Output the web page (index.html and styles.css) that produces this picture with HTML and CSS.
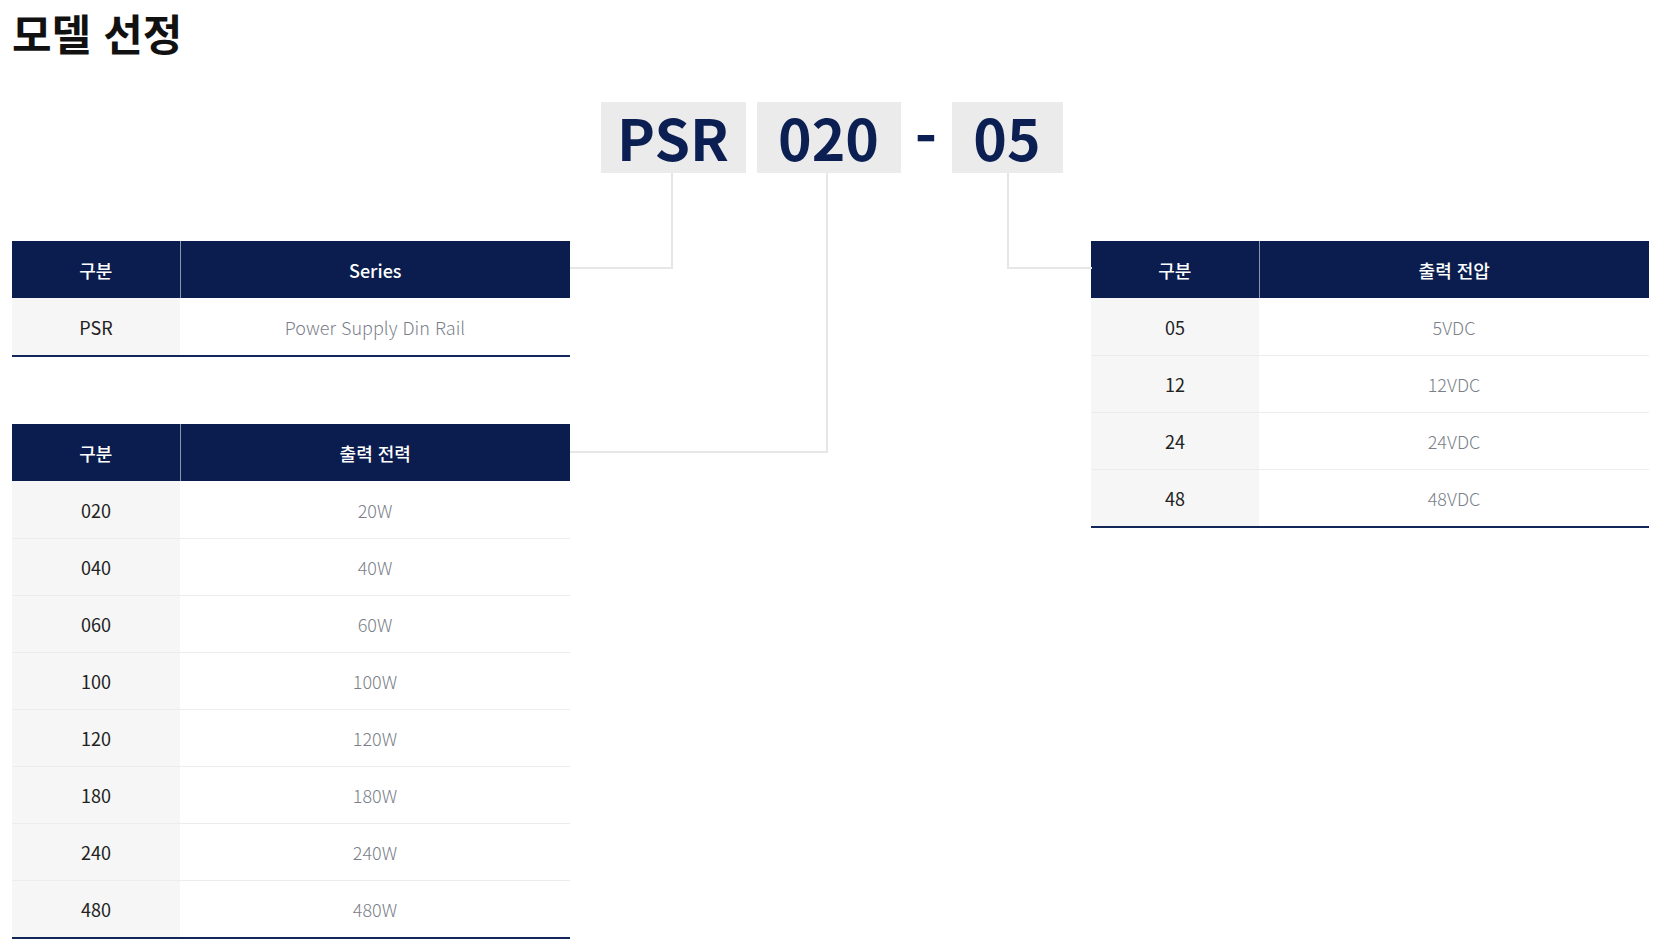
FILE: index.html
```html
<!DOCTYPE html>
<html lang="ko">
<head>
<meta charset="utf-8">
<title>모델 선정</title>
<link rel="stylesheet" href="styles.css">
</head>
<body>
<div class="page">
  <h1 class="title">모델 선정</h1>
  <div class="diagram">
    <div class="code-row">
      <span class="code code-wide">PSR</span>
      <span class="code code-wide">020</span>
      <span class="dash">-</span>
      <span class="code code-short">05</span>
    </div>
    <div class="tables">
      <div class="col">
        <table class="spec">
          <colgroup><col class="c1"><col></colgroup>
          <thead><tr><th>구분</th><th>Series</th></tr></thead>
          <tbody>
            <tr><td>PSR</td><td>Power Supply Din Rail</td></tr>
          </tbody>
        </table>
        <table class="spec spec-gap">
          <colgroup><col class="c1"><col></colgroup>
          <thead><tr><th>구분</th><th>출력 전력</th></tr></thead>
          <tbody>
            <tr><td>020</td><td>20W</td></tr>
            <tr><td>040</td><td>40W</td></tr>
            <tr><td>060</td><td>60W</td></tr>
            <tr><td>100</td><td>100W</td></tr>
            <tr><td>120</td><td>120W</td></tr>
            <tr><td>180</td><td>180W</td></tr>
            <tr><td>240</td><td>240W</td></tr>
            <tr><td>480</td><td>480W</td></tr>
          </tbody>
        </table>
      </div>
      <div class="col">
        <table class="spec">
          <colgroup><col class="c1"><col></colgroup>
          <thead><tr><th>구분</th><th>출력 전압</th></tr></thead>
          <tbody>
            <tr><td>05</td><td>5VDC</td></tr>
            <tr><td>12</td><td>12VDC</td></tr>
            <tr><td>24</td><td>24VDC</td></tr>
            <tr><td>48</td><td>48VDC</td></tr>
          </tbody>
        </table>
      </div>
    </div>
    <div class="conn conn-psr"></div>
    <div class="conn conn-power"></div>
    <div class="conn conn-volt"></div>
  </div>
</div>
</body>
</html>
```

FILE: styles.css
```css
html, body {
  margin: 0;
  padding: 0;
  background: #ffffff;
}

body {
  font-family: "Noto Sans CJK KR", "Noto Sans", sans-serif;
  color: #222222;
}

.page {
  width: 1663px;
  padding: 6px 0 0 0;
}

.title {
  margin: 0 0 0 12px;
  font-size: 43px;
  line-height: 52px;
  font-weight: 700;
  color: #111111;
  letter-spacing: 0;
}

.diagram {
  position: relative;
  margin-top: 44px;
}

.code-row {
  display: flex;
  justify-content: center;
  align-items: stretch;
  height: 71px;
}

.code {
  display: flex;
  align-items: center;
  justify-content: center;
  background: #ebebeb;
  color: #0c1f52;
  font-size: 57px;
  font-weight: 700;
  line-height: 1;
  padding-bottom: 3px;
  box-sizing: border-box;
}

.code-wide {
  width: 145px;
}

.code-wide + .code-wide {
  margin-left: 11px;
  width: 144px;
}

.code-short {
  width: 111px;
}

.dash {
  width: 51px;
  display: flex;
  align-items: center;
  justify-content: center;
  color: #0c1f52;
  font-size: 60px;
  font-weight: 700;
  line-height: 1;
  padding-bottom: 6px;
  box-sizing: border-box;
}

.tables {
  display: flex;
  justify-content: space-between;
  padding: 0 14px 0 12px;
  margin-top: 68px;
}

.col {
  width: 558px;
  display: flex;
  flex-direction: column;
}

.spec {
  width: 558px;
  border-collapse: collapse;
  table-layout: fixed;
  border-bottom: 2px solid #13265a;
}

.spec-gap {
  margin-top: 67px;
}

.spec col.c1 {
  width: 168px;
}

.spec th {
  height: 57px;
  padding: 0;
  background: #0b1d4f;
  color: #ffffff;
  font-size: 18px;
  font-weight: 500;
  text-align: center;
  vertical-align: middle;
}

.spec th + th {
  border-left: 1px solid #8c94aa;
}

.spec td {
  height: 56px;
  padding: 0;
  border-top: 1px solid #ececec;
  font-size: 18px;
  text-align: center;
  vertical-align: middle;
}

.spec thead + tbody tr:first-child td {
  border-top: none;
  height: 57px;
}

.spec td:first-child {
  background: #f6f6f6;
  color: #222222;
  font-weight: 400;
}

.spec td + td {
  color: #7b7f8a;
  font-weight: 300;
}

.conn {
  position: absolute;
  top: 71px;
  box-sizing: border-box;
  border: 0 solid #e6e6e6;
}

.conn-psr {
  left: 570px;
  width: 103px;
  height: 96px;
  border-right-width: 2px;
  border-bottom-width: 2px;
}

.conn-power {
  left: 570px;
  width: 258px;
  height: 280px;
  border-right-width: 2px;
  border-bottom-width: 2px;
}

.conn-volt {
  left: 1007px;
  width: 85px;
  height: 96px;
  border-left-width: 2px;
  border-bottom-width: 2px;
}
```
